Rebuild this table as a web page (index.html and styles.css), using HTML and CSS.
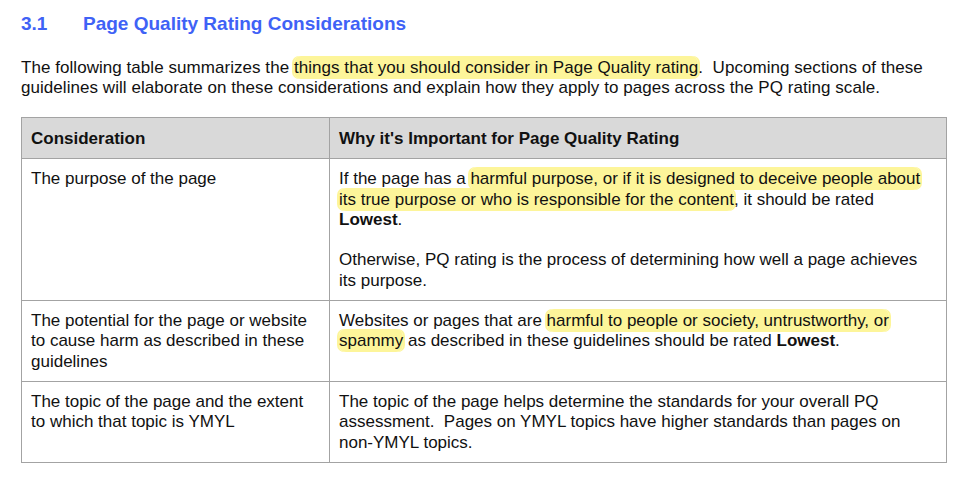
FILE: index.html
```html
<!DOCTYPE html>
<html>
<head>
<meta charset="utf-8">
<link rel="stylesheet" href="styles.css">
</head>
<body>
<div class="page">
  <h2 class="heading"><span class="num">3.1</span><span>Page Quality Rating Considerations</span></h2>
  <p class="intro">The following table summarizes the <span class="hl">things that you should consider in Page Quality rating</span>.&nbsp; Upcoming sections of these guidelines will elaborate on these considerations and explain how they apply to pages across the PQ rating scale.</p>
  <table class="tbl">
    <colgroup><col class="c1"><col class="c2"></colgroup>
    <thead>
      <tr><th>Consideration</th><th>Why it's Important for Page Quality Rating</th></tr>
    </thead>
    <tbody>
      <tr>
        <td>The purpose of the page</td>
        <td>
          <p>If the page has a <span class="hl">harmful purpose, or if it is designed to deceive people about its true purpose or who is responsible for the content</span>, it should be rated <b>Lowest</b>.</p>
          <p class="gap">Otherwise, PQ rating is the process of determining how well a page achieves its purpose.</p>
        </td>
      </tr>
      <tr>
        <td>The potential for the page or website to cause harm as described in these guidelines</td>
        <td>Websites or pages that are <span class="hl">harmful to people or society, untrustworthy, or spammy</span> as described in these guidelines should be rated <b>Lowest</b>.</td>
      </tr>
      <tr>
        <td>The topic of the page and the extent to which that topic is YMYL</td>
        <td>The topic of the page helps determine the standards for your overall PQ assessment.&nbsp; Pages on YMYL topics have higher standards than pages on non-YMYL topics.</td>
      </tr>
    </tbody>
  </table>
</div>
</body>
</html>
```

FILE: styles.css
```css
html, body {
  margin: 0;
  padding: 0;
  background: #ffffff;
}
body {
  font-family: "Liberation Sans", Arial, sans-serif;
  color: #111111;
}
.page {
  padding: 12px 0 0 21px;
  width: 925px;
}
.heading {
  margin: 0;
  font-size: 19px;
  line-height: 24px;
  font-weight: bold;
  color: #3f62f6;
  display: flex;
}
.heading .num {
  width: 62px;
}
.intro {
  margin: 22px 0 0 0;
  font-size: 17px;
  line-height: 20px;
  width: 915px;
  letter-spacing: 0.05px;
}
.hl {
  background: #fdf59a;
  border-radius: 7px;
  padding: 2px 0;
  box-shadow: 2px 0 0 #fdf59a, -2px 0 0 #fdf59a;
  -webkit-box-decoration-break: clone;
  box-decoration-break: clone;
}
.tbl {
  margin-top: 19px;
  border-collapse: collapse;
  width: 926px;
  font-size: 17px;
  line-height: 20.3px;
  table-layout: fixed;
}
.tbl .c1 { width: 308px; }
.tbl th, .tbl td {
  border: 1px solid #a3a3a3;
  padding: 10px 8px 9px 9px;
  text-align: left;
  vertical-align: top;
}
.tbl th {
  background: #d9d9d9;
  font-weight: bold;
  padding-top: 11px;
  padding-bottom: 9px;
}
.tbl p {
  margin: 0;
}
.tbl p.gap {
  margin-top: 20.3px;
}
b {
  font-weight: bold;
}
```
